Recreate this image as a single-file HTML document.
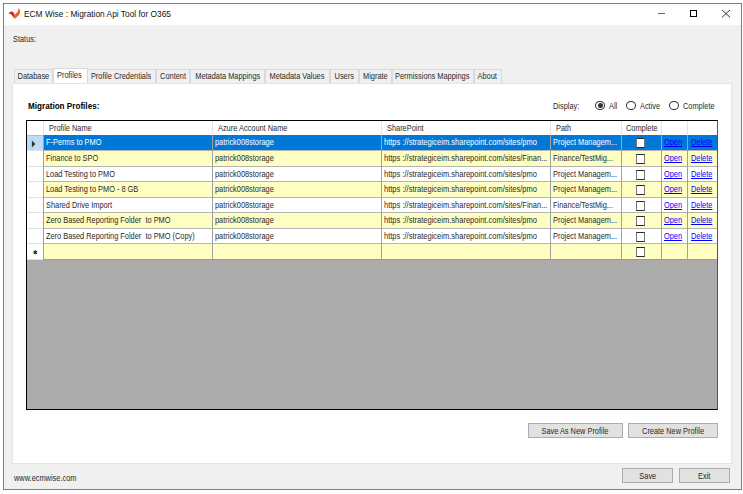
<!DOCTYPE html>
<html><head><meta charset="utf-8">
<style>
*{margin:0;padding:0;box-sizing:border-box}
html,body{width:743px;height:494px;overflow:hidden;background:#fff;font-family:"Liberation Sans",sans-serif;color:#000}
.a{position:absolute}
.t{position:absolute;white-space:pre;line-height:10px;transform-origin:0 0}
.lnk{text-decoration:underline}
</style></head><body>
<div class="a" style="left:3px;top:3px;width:739px;height:487px;border:1px solid #5086c8;background:#f0f0f0"></div>
<div class="a" style="left:4px;top:4px;width:737px;height:20.5px;background:#fff"></div>
<svg class="a" style="left:6px;top:6px" width="18" height="16" viewBox="0 0 18 16">
<path d="M2.6 7.6 C3.4 6.2 4.6 5.4 6 5.6 C7.4 5.9 8 7.2 8.3 8.6 L8.6 12.6 C7.4 11.6 6.6 10 5.6 8.8 C4.8 8 3.8 7.6 2.6 7.6Z" fill="#d81e2c"/>
<path d="M8.1 8.8 C9.8 7.8 11.2 6.6 12 5 C12.4 4 12.3 3 12.4 2.2 C13.4 2.8 14.2 3.8 14.2 5.4 C14.1 7.4 13 9 11.6 10.4 L8.6 12.9 C8.2 11.6 8 10.2 8.1 8.8Z" fill="#f0631e"/>
</svg>
<div class="t" style="left:23.50px;top:9.18px;font-size:9.0px;transform:scaleX(0.928);color:#111;">ECM Wise : Migration Api Tool for O365</div>
<div class="a" style="left:658px;top:13px;width:7px;height:1px;background:#666"></div>
<div class="a" style="left:690px;top:10.2px;width:7px;height:6.8px;border:1.2px solid #000"></div>
<svg class="a" style="left:721px;top:9px" width="10" height="10" viewBox="0 0 10 10"><path d="M1 1L9 8.3M9 1L1 8.3" stroke="#222" stroke-width="0.9"/></svg>
<div class="t" style="left:12.80px;top:34.02px;font-size:8.6px;transform:scaleX(0.86);color:#2a2a2a;">Status:</div>
<div class="a" style="left:13.5px;top:69.2px;width:39.0px;height:13.8px;background:#f0f0f0;border:1px solid #d9d9d9;border-bottom:none"></div>
<div class="a" style="left:87px;top:69.2px;width:68.5px;height:13.8px;background:#f0f0f0;border:1px solid #d9d9d9;border-bottom:none"></div>
<div class="a" style="left:155.5px;top:69.2px;width:34.5px;height:13.8px;background:#f0f0f0;border:1px solid #d9d9d9;border-bottom:none"></div>
<div class="a" style="left:190px;top:69.2px;width:74.5px;height:13.8px;background:#f0f0f0;border:1px solid #d9d9d9;border-bottom:none"></div>
<div class="a" style="left:264.5px;top:69.2px;width:65.0px;height:13.8px;background:#f0f0f0;border:1px solid #d9d9d9;border-bottom:none"></div>
<div class="a" style="left:329.5px;top:69.2px;width:29.0px;height:13.8px;background:#f0f0f0;border:1px solid #d9d9d9;border-bottom:none"></div>
<div class="a" style="left:358.5px;top:69.2px;width:33.0px;height:13.8px;background:#f0f0f0;border:1px solid #d9d9d9;border-bottom:none"></div>
<div class="a" style="left:391.5px;top:69.2px;width:82.0px;height:13.8px;background:#f0f0f0;border:1px solid #d9d9d9;border-bottom:none"></div>
<div class="a" style="left:473.5px;top:69.2px;width:28.0px;height:13.8px;background:#f0f0f0;border:1px solid #d9d9d9;border-bottom:none"></div>
<div class="a" style="left:12px;top:82.5px;width:720px;height:381.2px;background:#fff;border:1px solid #e4e4e4"></div>
<div class="a" style="left:52.5px;top:68.3px;width:35.5px;height:15.2px;background:#fff;border:1px solid #d9d9d9;border-bottom:none"></div>
<div class="a" style="left:13.5px;top:70.9px;width:39.0px;height:10px;display:flex;justify-content:center"><div style="white-space:pre;font-size:8.6px;line-height:10px;transform:scaleX(0.86);color:#2a2a2a">Database</div></div>
<div class="a" style="left:52.5px;top:70.0px;width:34.5px;height:10px;display:flex;justify-content:center"><div style="white-space:pre;font-size:8.6px;line-height:10px;transform:scaleX(0.86);color:#2a2a2a">Profiles</div></div>
<div class="a" style="left:87px;top:70.9px;width:68.5px;height:10px;display:flex;justify-content:center"><div style="white-space:pre;font-size:8.6px;line-height:10px;transform:scaleX(0.86);color:#2a2a2a">Profile Credentials</div></div>
<div class="a" style="left:155.5px;top:70.9px;width:34.5px;height:10px;display:flex;justify-content:center"><div style="white-space:pre;font-size:8.6px;line-height:10px;transform:scaleX(0.86);color:#2a2a2a">Content</div></div>
<div class="a" style="left:190px;top:70.9px;width:74.5px;height:10px;display:flex;justify-content:center"><div style="white-space:pre;font-size:8.6px;line-height:10px;transform:scaleX(0.86);color:#2a2a2a">Metadata Mappings</div></div>
<div class="a" style="left:264.5px;top:70.9px;width:65.0px;height:10px;display:flex;justify-content:center"><div style="white-space:pre;font-size:8.6px;line-height:10px;transform:scaleX(0.86);color:#2a2a2a">Metadata Values</div></div>
<div class="a" style="left:329.5px;top:70.9px;width:29.0px;height:10px;display:flex;justify-content:center"><div style="white-space:pre;font-size:8.6px;line-height:10px;transform:scaleX(0.86);color:#2a2a2a">Users</div></div>
<div class="a" style="left:358.5px;top:70.9px;width:33.0px;height:10px;display:flex;justify-content:center"><div style="white-space:pre;font-size:8.6px;line-height:10px;transform:scaleX(0.86);color:#2a2a2a">Migrate</div></div>
<div class="a" style="left:391.5px;top:70.9px;width:82.0px;height:10px;display:flex;justify-content:center"><div style="white-space:pre;font-size:8.6px;line-height:10px;transform:scaleX(0.86);color:#2a2a2a">Permissions Mappings</div></div>
<div class="a" style="left:473.5px;top:70.9px;width:28.0px;height:10px;display:flex;justify-content:center"><div style="white-space:pre;font-size:8.6px;line-height:10px;transform:scaleX(0.86);color:#2a2a2a">About</div></div>
<div class="t" style="left:27.80px;top:100.50px;font-size:9.8px;transform:scaleX(0.83);color:#000;font-weight:bold;">Migration Profiles:</div>
<div class="t" style="left:553.00px;top:100.82px;font-size:8.6px;transform:scaleX(0.86);color:#2a2a2a;">Display:</div>
<div class="a" style="left:595.10px;top:100.9px;width:9.8px;height:9.1px;border:1px solid #333;border-radius:50%;background:#fff"></div>
<div class="a" style="left:597.50px;top:102.9px;width:5.2px;height:5.2px;border-radius:50%;background:#333"></div>
<div class="t" style="left:609.00px;top:100.82px;font-size:8.6px;transform:scaleX(0.86);color:#2a2a2a;">All</div>
<div class="a" style="left:626.10px;top:100.9px;width:9.8px;height:9.1px;border:1px solid #333;border-radius:50%;background:#fff"></div>
<div class="t" style="left:640.30px;top:100.82px;font-size:8.6px;transform:scaleX(0.86);color:#2a2a2a;">Active</div>
<div class="a" style="left:668.90px;top:100.9px;width:9.8px;height:9.1px;border:1px solid #333;border-radius:50%;background:#fff"></div>
<div class="t" style="left:682.90px;top:100.82px;font-size:8.6px;transform:scaleX(0.86);color:#2a2a2a;">Complete</div>
<div class="a" style="left:26px;top:120px;width:692px;height:290px;border:1px solid #000;border-right-color:#555;background:#ababab"></div>
<div class="a" style="left:27px;top:121px;width:690px;height:14.3px;background:#fff"></div>
<div class="a" style="left:43px;top:121px;width:1px;height:14.3px;background:#e3e3e3"></div>
<div class="a" style="left:212px;top:121px;width:1px;height:14.3px;background:#e3e3e3"></div>
<div class="a" style="left:381px;top:121px;width:1px;height:14.3px;background:#e3e3e3"></div>
<div class="a" style="left:550px;top:121px;width:1px;height:14.3px;background:#e3e3e3"></div>
<div class="a" style="left:621px;top:121px;width:1px;height:14.3px;background:#e3e3e3"></div>
<div class="a" style="left:661px;top:121px;width:1px;height:14.3px;background:#e3e3e3"></div>
<div class="a" style="left:687px;top:121px;width:1px;height:14.3px;background:#e3e3e3"></div>
<div class="t" style="left:48.80px;top:122.82px;font-size:8.6px;transform:scaleX(0.86);color:#2a2a2a;">Profile Name</div>
<div class="t" style="left:217.60px;top:122.82px;font-size:8.6px;transform:scaleX(0.86);color:#2a2a2a;">Azure Account Name</div>
<div class="t" style="left:386.70px;top:122.82px;font-size:8.6px;transform:scaleX(0.86);color:#2a2a2a;">SharePoint</div>
<div class="t" style="left:556.40px;top:122.82px;font-size:8.6px;transform:scaleX(0.86);color:#2a2a2a;">Path</div>
<div class="t" style="left:625.70px;top:122.82px;font-size:8.6px;transform:scaleX(0.86);color:#2a2a2a;">Complete</div>
<div class="a" style="left:27px;top:135px;width:16px;height:16px;background:#bcdcf4;border-bottom:1px solid #e3e3e3"></div>
<div class="a" style="left:27px;top:135px;width:16px;height:1px;background:#b9b9b9"></div>
<div class="a" style="left:44px;top:135px;width:673px;height:16px;background:#0078d7;border-bottom:1px solid #b4b4b4"></div>
<div class="a" style="left:43px;top:135px;width:1px;height:16px;background:#a0a0a0"></div>
<div class="a" style="left:212px;top:135px;width:1px;height:16px;background:#a0a0a0"></div>
<div class="a" style="left:381px;top:135px;width:1px;height:16px;background:#a0a0a0"></div>
<div class="a" style="left:550px;top:135px;width:1px;height:16px;background:#a0a0a0"></div>
<div class="a" style="left:621px;top:135px;width:1px;height:16px;background:#a0a0a0"></div>
<div class="a" style="left:661px;top:135px;width:1px;height:16px;background:#a0a0a0"></div>
<div class="a" style="left:687px;top:135px;width:1px;height:16px;background:#a0a0a0"></div>
<div class="t" style="left:45.80px;top:137.22px;font-size:8.6px;transform:scaleX(0.86);color:#fff;">F-Perms to PMO</div>
<div class="t" style="left:214.70px;top:137.22px;font-size:8.6px;transform:scaleX(0.86);color:#fff;">patrick008storage</div>
<div class="t" style="left:383.80px;top:137.22px;font-size:8.6px;transform:scaleX(0.875);color:#fff;">https ://strategiceim.sharepoint.com/sites/pmo</div>
<div class="t" style="left:552.50px;top:137.22px;font-size:8.6px;transform:scaleX(0.86);color:#fff;">Project Managem...</div>
<div class="t" style="left:664.30px;top:137.22px;font-size:8.6px;transform:scaleX(0.86);color:#0000ff;text-decoration:underline;text-decoration-skip-ink:none">Open</div>
<div class="t" style="left:690.80px;top:137.22px;font-size:8.6px;transform:scaleX(0.86);color:#0000ff;text-decoration:underline;text-decoration-skip-ink:none">Delete</div>
<div class="a" style="left:636.3px;top:138.4px;width:9.2px;height:9.2px;background:#fff;border:1px solid #2a2a2a;border-left-color:#777;border-right-color:#777"></div>
<svg class="a" style="left:31px;top:140.2px" width="5" height="8" viewBox="0 0 5 8"><path d="M0.9 0.4L4.4 3.9L0.9 7.4Z" fill="#333"/></svg>
<div class="a" style="left:27px;top:151px;width:16px;height:16px;background:#fff;border-bottom:1px solid #e3e3e3"></div>
<div class="a" style="left:44px;top:151px;width:673px;height:16px;background:#fffec2;border-bottom:1px solid #b4b4b4"></div>
<div class="a" style="left:43px;top:151px;width:1px;height:16px;background:#a0a0a0"></div>
<div class="a" style="left:212px;top:151px;width:1px;height:16px;background:#a0a0a0"></div>
<div class="a" style="left:381px;top:151px;width:1px;height:16px;background:#a0a0a0"></div>
<div class="a" style="left:550px;top:151px;width:1px;height:16px;background:#a0a0a0"></div>
<div class="a" style="left:621px;top:151px;width:1px;height:16px;background:#a0a0a0"></div>
<div class="a" style="left:661px;top:151px;width:1px;height:16px;background:#a0a0a0"></div>
<div class="a" style="left:687px;top:151px;width:1px;height:16px;background:#a0a0a0"></div>
<div class="t" style="left:45.80px;top:153.22px;font-size:8.6px;transform:scaleX(0.86);color:#2a2a2a;">Finance to SPO</div>
<div class="t" style="left:214.70px;top:153.22px;font-size:8.6px;transform:scaleX(0.86);color:#2a2a2a;">patrick008storage</div>
<div class="t" style="left:383.80px;top:153.22px;font-size:8.6px;transform:scaleX(0.875);color:#2a2a2a;">https ://strategiceim.sharepoint.com/sites/Finan...</div>
<div class="t" style="left:552.50px;top:153.22px;font-size:8.6px;transform:scaleX(0.86);color:#2a2a2a;">Finance/TestMig...</div>
<div class="t" style="left:664.30px;top:153.22px;font-size:8.6px;transform:scaleX(0.86);color:#0000ff;text-decoration:underline;text-decoration-skip-ink:none">Open</div>
<div class="t" style="left:690.80px;top:153.22px;font-size:8.6px;transform:scaleX(0.86);color:#0000ff;text-decoration:underline;text-decoration-skip-ink:none">Delete</div>
<div class="a" style="left:636.3px;top:154.4px;width:9.2px;height:9.2px;background:#fff;border:1px solid #2a2a2a;border-left-color:#777;border-right-color:#777"></div>
<div class="a" style="left:27px;top:167px;width:16px;height:15px;background:#fff;border-bottom:1px solid #e3e3e3"></div>
<div class="a" style="left:44px;top:167px;width:673px;height:15px;background:#fff;border-bottom:1px solid #b4b4b4"></div>
<div class="a" style="left:43px;top:167px;width:1px;height:15px;background:#a0a0a0"></div>
<div class="a" style="left:212px;top:167px;width:1px;height:15px;background:#a0a0a0"></div>
<div class="a" style="left:381px;top:167px;width:1px;height:15px;background:#a0a0a0"></div>
<div class="a" style="left:550px;top:167px;width:1px;height:15px;background:#a0a0a0"></div>
<div class="a" style="left:621px;top:167px;width:1px;height:15px;background:#a0a0a0"></div>
<div class="a" style="left:661px;top:167px;width:1px;height:15px;background:#a0a0a0"></div>
<div class="a" style="left:687px;top:167px;width:1px;height:15px;background:#a0a0a0"></div>
<div class="t" style="left:45.80px;top:169.22px;font-size:8.6px;transform:scaleX(0.86);color:#2a2a2a;">Load Testing to PMO</div>
<div class="t" style="left:214.70px;top:169.22px;font-size:8.6px;transform:scaleX(0.86);color:#2a2a2a;">patrick008storage</div>
<div class="t" style="left:383.80px;top:169.22px;font-size:8.6px;transform:scaleX(0.875);color:#2a2a2a;">https ://strategiceim.sharepoint.com/sites/pmo</div>
<div class="t" style="left:552.50px;top:169.22px;font-size:8.6px;transform:scaleX(0.86);color:#2a2a2a;">Project Managem...</div>
<div class="t" style="left:664.30px;top:169.22px;font-size:8.6px;transform:scaleX(0.86);color:#0000ff;text-decoration:underline;text-decoration-skip-ink:none">Open</div>
<div class="t" style="left:690.80px;top:169.22px;font-size:8.6px;transform:scaleX(0.86);color:#0000ff;text-decoration:underline;text-decoration-skip-ink:none">Delete</div>
<div class="a" style="left:636.3px;top:170.4px;width:9.2px;height:9.2px;background:#fff;border:1px solid #2a2a2a;border-left-color:#777;border-right-color:#777"></div>
<div class="a" style="left:27px;top:182px;width:16px;height:16px;background:#fff;border-bottom:1px solid #e3e3e3"></div>
<div class="a" style="left:44px;top:182px;width:673px;height:16px;background:#fffec2;border-bottom:1px solid #b4b4b4"></div>
<div class="a" style="left:43px;top:182px;width:1px;height:16px;background:#a0a0a0"></div>
<div class="a" style="left:212px;top:182px;width:1px;height:16px;background:#a0a0a0"></div>
<div class="a" style="left:381px;top:182px;width:1px;height:16px;background:#a0a0a0"></div>
<div class="a" style="left:550px;top:182px;width:1px;height:16px;background:#a0a0a0"></div>
<div class="a" style="left:621px;top:182px;width:1px;height:16px;background:#a0a0a0"></div>
<div class="a" style="left:661px;top:182px;width:1px;height:16px;background:#a0a0a0"></div>
<div class="a" style="left:687px;top:182px;width:1px;height:16px;background:#a0a0a0"></div>
<div class="t" style="left:45.80px;top:184.22px;font-size:8.6px;transform:scaleX(0.86);color:#2a2a2a;">Load Testing to PMO - 8 GB</div>
<div class="t" style="left:214.70px;top:184.22px;font-size:8.6px;transform:scaleX(0.86);color:#2a2a2a;">patrick008storage</div>
<div class="t" style="left:383.80px;top:184.22px;font-size:8.6px;transform:scaleX(0.875);color:#2a2a2a;">https ://strategiceim.sharepoint.com/sites/pmo</div>
<div class="t" style="left:552.50px;top:184.22px;font-size:8.6px;transform:scaleX(0.86);color:#2a2a2a;">Project Managem...</div>
<div class="t" style="left:664.30px;top:184.22px;font-size:8.6px;transform:scaleX(0.86);color:#0000ff;text-decoration:underline;text-decoration-skip-ink:none">Open</div>
<div class="t" style="left:690.80px;top:184.22px;font-size:8.6px;transform:scaleX(0.86);color:#0000ff;text-decoration:underline;text-decoration-skip-ink:none">Delete</div>
<div class="a" style="left:636.3px;top:185.4px;width:9.2px;height:9.2px;background:#fff;border:1px solid #2a2a2a;border-left-color:#777;border-right-color:#777"></div>
<div class="a" style="left:27px;top:198px;width:16px;height:15px;background:#fff;border-bottom:1px solid #e3e3e3"></div>
<div class="a" style="left:44px;top:198px;width:673px;height:15px;background:#fff;border-bottom:1px solid #b4b4b4"></div>
<div class="a" style="left:43px;top:198px;width:1px;height:15px;background:#a0a0a0"></div>
<div class="a" style="left:212px;top:198px;width:1px;height:15px;background:#a0a0a0"></div>
<div class="a" style="left:381px;top:198px;width:1px;height:15px;background:#a0a0a0"></div>
<div class="a" style="left:550px;top:198px;width:1px;height:15px;background:#a0a0a0"></div>
<div class="a" style="left:621px;top:198px;width:1px;height:15px;background:#a0a0a0"></div>
<div class="a" style="left:661px;top:198px;width:1px;height:15px;background:#a0a0a0"></div>
<div class="a" style="left:687px;top:198px;width:1px;height:15px;background:#a0a0a0"></div>
<div class="t" style="left:45.80px;top:200.22px;font-size:8.6px;transform:scaleX(0.86);color:#2a2a2a;">Shared Drive Import</div>
<div class="t" style="left:214.70px;top:200.22px;font-size:8.6px;transform:scaleX(0.86);color:#2a2a2a;">patrick008storage</div>
<div class="t" style="left:383.80px;top:200.22px;font-size:8.6px;transform:scaleX(0.875);color:#2a2a2a;">https ://strategiceim.sharepoint.com/sites/Finan...</div>
<div class="t" style="left:552.50px;top:200.22px;font-size:8.6px;transform:scaleX(0.86);color:#2a2a2a;">Finance/TestMig...</div>
<div class="t" style="left:664.30px;top:200.22px;font-size:8.6px;transform:scaleX(0.86);color:#0000ff;text-decoration:underline;text-decoration-skip-ink:none">Open</div>
<div class="t" style="left:690.80px;top:200.22px;font-size:8.6px;transform:scaleX(0.86);color:#0000ff;text-decoration:underline;text-decoration-skip-ink:none">Delete</div>
<div class="a" style="left:636.3px;top:201.4px;width:9.2px;height:9.2px;background:#fff;border:1px solid #2a2a2a;border-left-color:#777;border-right-color:#777"></div>
<div class="a" style="left:27px;top:213px;width:16px;height:16px;background:#fff;border-bottom:1px solid #e3e3e3"></div>
<div class="a" style="left:44px;top:213px;width:673px;height:16px;background:#fffec2;border-bottom:1px solid #b4b4b4"></div>
<div class="a" style="left:43px;top:213px;width:1px;height:16px;background:#a0a0a0"></div>
<div class="a" style="left:212px;top:213px;width:1px;height:16px;background:#a0a0a0"></div>
<div class="a" style="left:381px;top:213px;width:1px;height:16px;background:#a0a0a0"></div>
<div class="a" style="left:550px;top:213px;width:1px;height:16px;background:#a0a0a0"></div>
<div class="a" style="left:621px;top:213px;width:1px;height:16px;background:#a0a0a0"></div>
<div class="a" style="left:661px;top:213px;width:1px;height:16px;background:#a0a0a0"></div>
<div class="a" style="left:687px;top:213px;width:1px;height:16px;background:#a0a0a0"></div>
<div class="t" style="left:45.80px;top:215.22px;font-size:8.6px;transform:scaleX(0.86);color:#2a2a2a;">Zero Based Reporting Folder  to PMO</div>
<div class="t" style="left:214.70px;top:215.22px;font-size:8.6px;transform:scaleX(0.86);color:#2a2a2a;">patrick008storage</div>
<div class="t" style="left:383.80px;top:215.22px;font-size:8.6px;transform:scaleX(0.875);color:#2a2a2a;">https ://strategiceim.sharepoint.com/sites/pmo</div>
<div class="t" style="left:552.50px;top:215.22px;font-size:8.6px;transform:scaleX(0.86);color:#2a2a2a;">Project Managem...</div>
<div class="t" style="left:664.30px;top:215.22px;font-size:8.6px;transform:scaleX(0.86);color:#0000ff;text-decoration:underline;text-decoration-skip-ink:none">Open</div>
<div class="t" style="left:690.80px;top:215.22px;font-size:8.6px;transform:scaleX(0.86);color:#0000ff;text-decoration:underline;text-decoration-skip-ink:none">Delete</div>
<div class="a" style="left:636.3px;top:216.4px;width:9.2px;height:9.2px;background:#fff;border:1px solid #2a2a2a;border-left-color:#777;border-right-color:#777"></div>
<div class="a" style="left:27px;top:229px;width:16px;height:15px;background:#fff;border-bottom:1px solid #e3e3e3"></div>
<div class="a" style="left:44px;top:229px;width:673px;height:15px;background:#fff;border-bottom:1px solid #b4b4b4"></div>
<div class="a" style="left:43px;top:229px;width:1px;height:15px;background:#a0a0a0"></div>
<div class="a" style="left:212px;top:229px;width:1px;height:15px;background:#a0a0a0"></div>
<div class="a" style="left:381px;top:229px;width:1px;height:15px;background:#a0a0a0"></div>
<div class="a" style="left:550px;top:229px;width:1px;height:15px;background:#a0a0a0"></div>
<div class="a" style="left:621px;top:229px;width:1px;height:15px;background:#a0a0a0"></div>
<div class="a" style="left:661px;top:229px;width:1px;height:15px;background:#a0a0a0"></div>
<div class="a" style="left:687px;top:229px;width:1px;height:15px;background:#a0a0a0"></div>
<div class="t" style="left:45.80px;top:231.22px;font-size:8.6px;transform:scaleX(0.86);color:#2a2a2a;">Zero Based Reporting Folder  to PMO (Copy)</div>
<div class="t" style="left:214.70px;top:231.22px;font-size:8.6px;transform:scaleX(0.86);color:#2a2a2a;">patrick008storage</div>
<div class="t" style="left:383.80px;top:231.22px;font-size:8.6px;transform:scaleX(0.875);color:#2a2a2a;">https ://strategiceim.sharepoint.com/sites/pmo</div>
<div class="t" style="left:552.50px;top:231.22px;font-size:8.6px;transform:scaleX(0.86);color:#2a2a2a;">Project Managem...</div>
<div class="t" style="left:664.30px;top:231.22px;font-size:8.6px;transform:scaleX(0.86);color:#0000ff;text-decoration:underline;text-decoration-skip-ink:none">Open</div>
<div class="t" style="left:690.80px;top:231.22px;font-size:8.6px;transform:scaleX(0.86);color:#0000ff;text-decoration:underline;text-decoration-skip-ink:none">Delete</div>
<div class="a" style="left:636.3px;top:232.4px;width:9.2px;height:9.2px;background:#fff;border:1px solid #2a2a2a;border-left-color:#777;border-right-color:#777"></div>
<div class="a" style="left:27px;top:244px;width:16px;height:16px;background:#fff;border-bottom:1px solid #e3e3e3"></div>
<div class="a" style="left:44px;top:244px;width:673px;height:16px;background:#fffec2;border-bottom:1px solid #9a9a9a"></div>
<div class="a" style="left:43px;top:244px;width:1px;height:16px;background:#a0a0a0"></div>
<div class="a" style="left:212px;top:244px;width:1px;height:16px;background:#a0a0a0"></div>
<div class="a" style="left:381px;top:244px;width:1px;height:16px;background:#a0a0a0"></div>
<div class="a" style="left:550px;top:244px;width:1px;height:16px;background:#a0a0a0"></div>
<div class="a" style="left:621px;top:244px;width:1px;height:16px;background:#a0a0a0"></div>
<div class="a" style="left:661px;top:244px;width:1px;height:16px;background:#a0a0a0"></div>
<div class="a" style="left:687px;top:244px;width:1px;height:16px;background:#a0a0a0"></div>
<div class="a" style="left:636.3px;top:247.4px;width:9.2px;height:9.2px;background:#fff;border:1px solid #2a2a2a;border-left-color:#777;border-right-color:#777"></div>
<svg class="a" style="left:33.1px;top:250.1px" width="4.6" height="4.6" viewBox="0 0 5 5"><path d="M2.5 0.4V4.6M0.6 1.4L4.4 3.6M0.6 3.6L4.4 1.4" stroke="#3a3a3a" stroke-width="1.5"/></svg>
<div class="a" style="left:528px;top:423px;width:94.5px;height:15px;background:#e1e1e1;border:1px solid #adadad"></div>
<div class="a" style="left:528px;top:425.8px;width:94.5px;height:10px;display:flex;justify-content:center"><div style="white-space:pre;font-size:8.6px;line-height:10px;transform:scaleX(0.86);color:#2a2a2a">Save As New Profile</div></div>
<div class="a" style="left:628px;top:423px;width:90px;height:15px;background:#e1e1e1;border:1px solid #adadad"></div>
<div class="a" style="left:628px;top:425.8px;width:90px;height:10px;display:flex;justify-content:center"><div style="white-space:pre;font-size:8.6px;line-height:10px;transform:scaleX(0.86);color:#2a2a2a">Create New Profile</div></div>
<div class="a" style="left:622px;top:468px;width:51px;height:15px;background:#e1e1e1;border:1px solid #adadad"></div>
<div class="a" style="left:622px;top:471px;width:51px;height:10px;display:flex;justify-content:center"><div style="white-space:pre;font-size:8.6px;line-height:10px;transform:scaleX(0.86);color:#2a2a2a">Save</div></div>
<div class="a" style="left:679px;top:468px;width:51px;height:15px;background:#e1e1e1;border:1px solid #adadad"></div>
<div class="a" style="left:679px;top:471px;width:51px;height:10px;display:flex;justify-content:center"><div style="white-space:pre;font-size:8.6px;line-height:10px;transform:scaleX(0.86);color:#2a2a2a">Exit</div></div>
<div class="t" style="left:14.00px;top:473.32px;font-size:8.6px;transform:scaleX(0.86);color:#2a2a2a;">www.ecmwise.com</div>
</body></html>
